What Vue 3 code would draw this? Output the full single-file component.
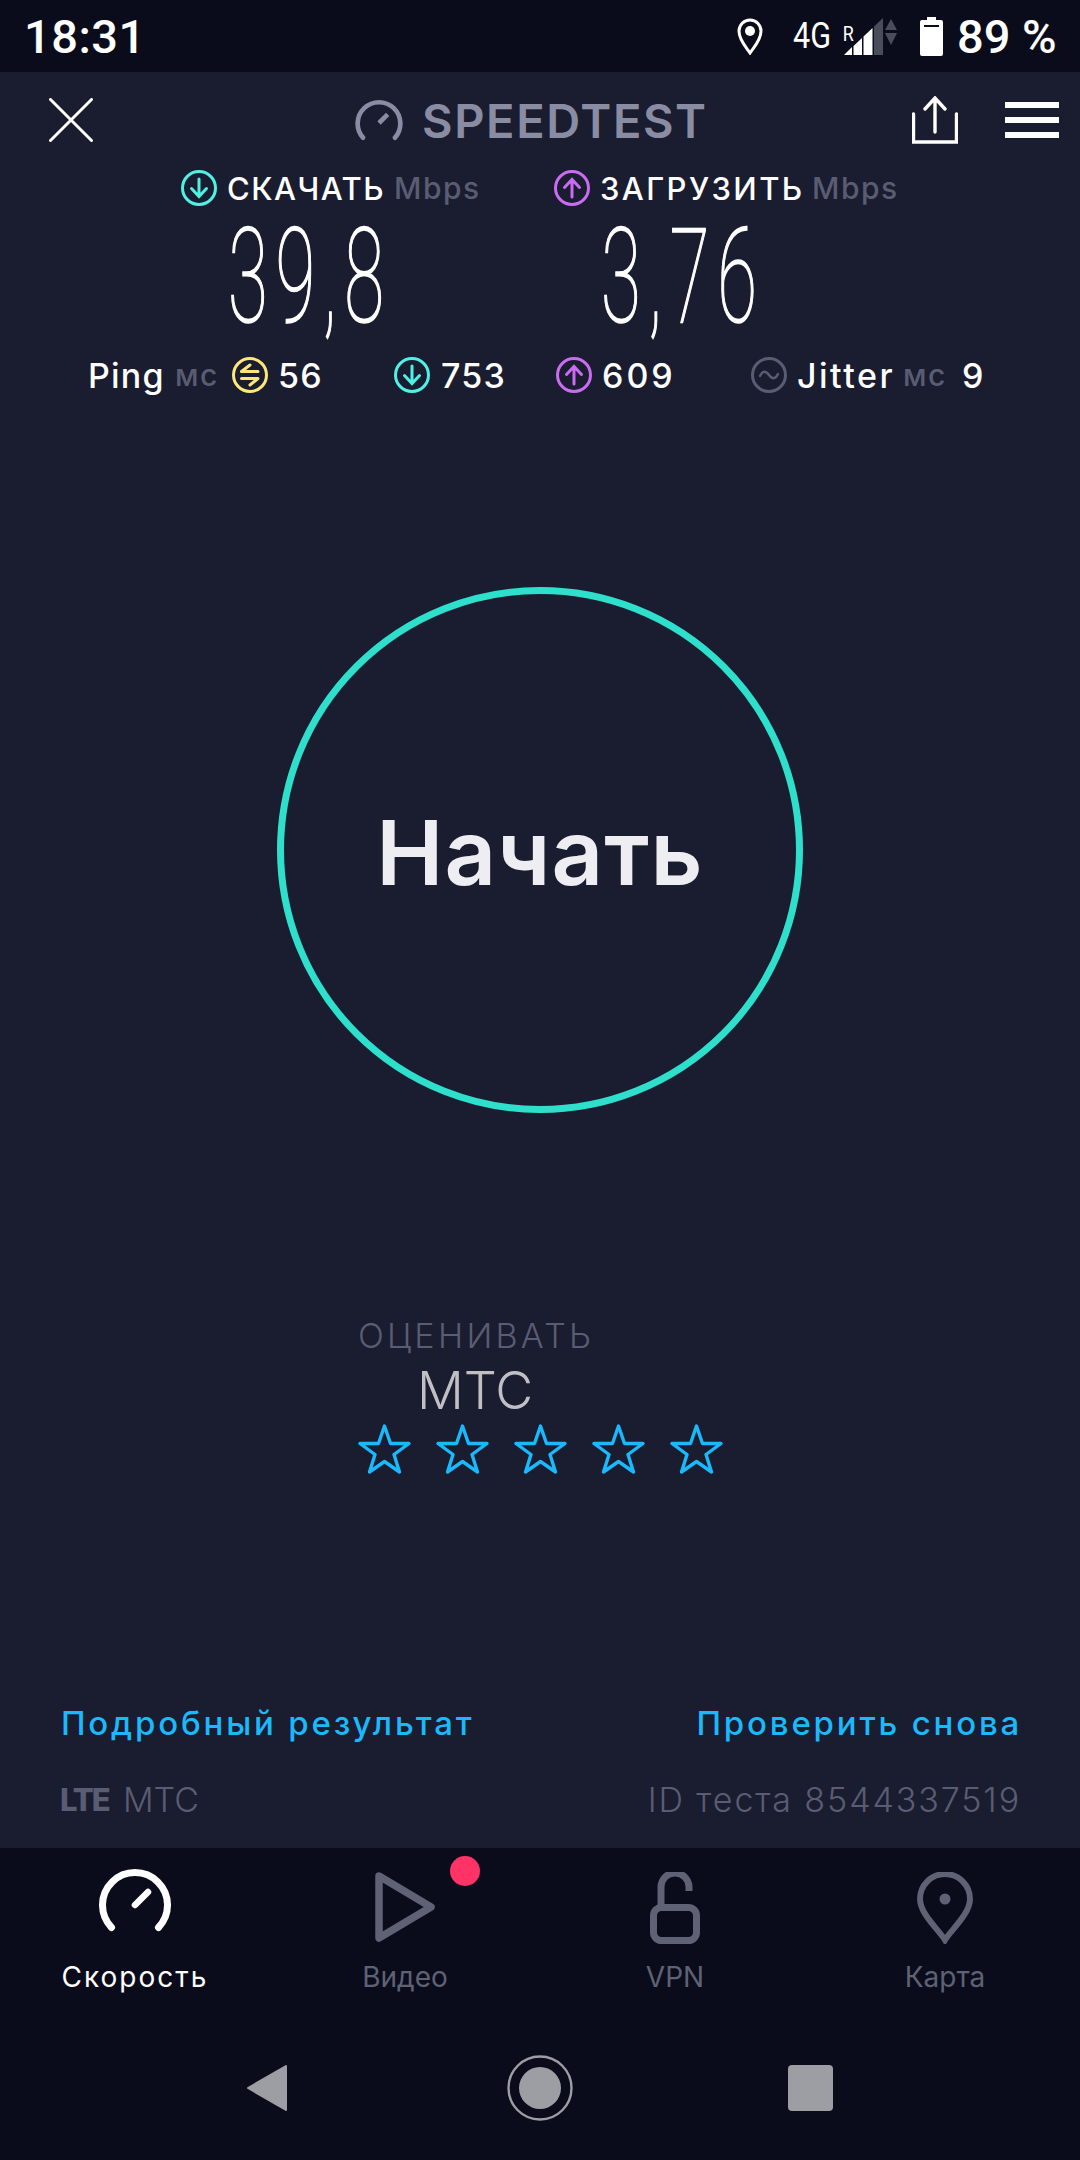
<script setup>
const stars = [1, 2, 3, 4, 5]
const starPath = 'M26.5 3 L32.5 20.5 L51 20.5 L36 31.5 L41.5 49 L26.5 38.5 L11.5 49 L17 31.5 L2 20.5 L20.5 20.5 Z'
</script>

<template>
  <div class="screen">
    <header class="status">
      <span class="time">18:31</span>
      <div class="status-right">
        <svg class="st-pin" viewBox="0 0 26 37" width="26" height="37">
          <path d="M13 35 C9 29 2 22 2 13 A11 11 0 0 1 24 13 C24 22 17 29 13 35 Z" fill="none" stroke="#fff" stroke-width="3" />
          <circle cx="13" cy="13" r="5" fill="#fff" />
        </svg>
        <span class="net">4G</span>
        <span class="roam">R</span>
        <svg class="st-signal" viewBox="0 0 53 37" width="53" height="37">
          <path d="M0 37 L8 29 V37 Z M9.5 28 L18 20 V37 H9.5 Z M19.5 18.5 L28.5 10 V37 H19.5 Z" fill="#fff" />
          <path d="M30 8.5 L39 0 V37 H30 Z" fill="#4b4c5a" />
          <path d="M41 12 L47 1 L53 12 Z M41 15 H53 L47 27 Z" fill="#4b4c5a" />
        </svg>
        <svg class="st-batt" viewBox="0 0 23 39" width="23" height="39">
          <path d="M7 0 H16 V3 H21 Q23 3 23 5 V37 Q23 39 21 39 H2 Q0 39 0 37 V5 Q0 3 2 3 H7 Z" fill="#fff" />
          <rect x="4" y="8" width="15" height="2" fill="#0a0c1b" />
        </svg>
        <span class="pct">89 %</span>
      </div>
    </header>

    <main class="main">
      <div class="topbar">
        <svg class="x-icon" viewBox="0 0 44 44" width="44" height="44">
          <path d="M1.5 1.5 L42.5 42.5 M42.5 1.5 L1.5 42.5" stroke="#fff" stroke-width="3" stroke-linecap="round" />
        </svg>
        <div class="brand">
          <svg viewBox="0 0 72 63" width="48" height="42">
            <path d="M12 58 A32 32 0 1 1 60 58" fill="none" stroke="#8a8ca3" stroke-width="7" stroke-linecap="round" />
            <path d="M36 36 L49 23" stroke="#8a8ca3" stroke-width="7" />
          </svg>
          <span class="brand-text">SPEEDTEST</span>
        </div>
        <div class="top-actions">
          <svg viewBox="0 0 46 48" width="46" height="48">
            <path d="M1.5 18 V46 H44.5 V18 M23 36 V3 M13 13 L23 2 L33 13" fill="none" stroke="#fff" stroke-width="3.4" stroke-linecap="round" />
          </svg>
          <div class="menu"><i></i><i></i><i></i></div>
        </div>
      </div>

      <div class="speeds">
        <div class="speed speed-down">
          <div class="speed-head">
            <svg class="ci" viewBox="0 0 36 36">
              <circle cx="18" cy="18" r="16.5" fill="none" stroke="#4df2e4" stroke-width="3" />
              <path d="M18 9 V26 M10.5 18.5 L18 26.5 L25.5 18.5" fill="none" stroke="#4df2e4" stroke-width="3" stroke-linecap="round" />
            </svg>
            <span class="label w-dl">СКАЧАТЬ</span>
            <span class="unit">Mbps</span>
          </div>
          <div class="big"><span>39,8</span></div>
        </div>
        <div class="speed speed-up">
          <div class="speed-head">
            <svg class="ci" viewBox="0 0 36 36">
              <circle cx="18" cy="18" r="16.5" fill="none" stroke="#ca6cf2" stroke-width="3" />
              <path d="M18 27 V10 M10.5 17.5 L18 9.5 L25.5 17.5" fill="none" stroke="#ca6cf2" stroke-width="3" stroke-linecap="round" />
            </svg>
            <span class="label w-ul">ЗАГРУЗИТЬ</span>
            <span class="unit">Mbps</span>
          </div>
          <div class="big"><span>3,76</span></div>
        </div>
      </div>

      <div class="metrics">
        <span class="m-text w-ping">Ping</span>
        <span class="unit w-ms">мс</span>
        <svg class="ci" viewBox="0 0 36 36">
          <circle cx="18" cy="18" r="16.5" fill="none" stroke="#fbe77a" stroke-width="3" />
          <path d="M18 8 L9.5 14.5 H26 M9.5 21.5 H26 L18 28" fill="none" stroke="#fbe77a" stroke-width="3" stroke-linecap="round" stroke-linejoin="round" />
        </svg>
        <span class="m-text w-56">56</span>
        <svg class="ci" viewBox="0 0 36 36">
          <circle cx="18" cy="18" r="16.5" fill="none" stroke="#4df2e4" stroke-width="3" />
          <path d="M18 9 V26 M10.5 18.5 L18 26.5 L25.5 18.5" fill="none" stroke="#4df2e4" stroke-width="3" stroke-linecap="round" />
        </svg>
        <span class="m-text w-753">753</span>
        <svg class="ci" viewBox="0 0 36 36">
          <circle cx="18" cy="18" r="16.5" fill="none" stroke="#ca6cf2" stroke-width="3" />
          <path d="M18 27 V10 M10.5 17.5 L18 9.5 L25.5 17.5" fill="none" stroke="#ca6cf2" stroke-width="3" stroke-linecap="round" />
        </svg>
        <span class="m-text w-609">609</span>
        <svg class="ci" viewBox="0 0 36 36">
          <circle cx="18" cy="18" r="16.5" fill="none" stroke="#5a5c73" stroke-width="3" />
          <path d="M9 19 C12 13 15 14 18 18 C21 22 24 23 27 17" fill="none" stroke="#5a5c73" stroke-width="2.4" stroke-linecap="round" />
        </svg>
        <span class="m-text w-jit">Jitter</span>
        <span class="unit w-ms2">мс</span>
        <span class="m-text">9</span>
      </div>

      <div class="start-wrap">
        <div class="start">Начать</div>
      </div>

      <div class="rate">
        <div class="rate-title">ОЦЕНИВАТЬ</div>
        <div class="rate-op">МТС</div>
        <div class="stars">
          <svg v-for="s in stars" :key="s" viewBox="0 0 53 52" width="53" height="52">
            <path :d="starPath" fill="none" stroke="#19b9fc" stroke-width="3.4" stroke-linejoin="round" />
          </svg>
        </div>
      </div>

      <div class="links">
        <span>Подробный результат</span>
        <span>Проверить снова</span>
      </div>
      <div class="meta">
        <span class="meta-left"><b>LTE</b><span>МТС</span></span>
        <span>ID теста 8544337519</span>
      </div>
    </main>

    <footer class="bottom">
      <nav class="tabs">
        <div class="tab active">
          <svg viewBox="0 0 72 63" width="72" height="63" class="tab-gauge">
            <path d="M12.5 58.5 A32.5 32.5 0 1 1 59.5 58.5" fill="none" stroke="#fff" stroke-width="7" stroke-linecap="round" />
            <path d="M36 36 L49 23" stroke="#fff" stroke-width="6.5" stroke-linecap="round" />
          </svg>
          <span>Скорость</span>
        </div>
        <div class="tab">
          <div class="play-wrap">
            <svg viewBox="0 0 60 70" width="60" height="70">
              <path d="M4 4 L56 35 L4 66 Z" fill="none" stroke="#5f6174" stroke-width="7.5" stroke-linejoin="round" />
            </svg>
            <i class="dot"></i>
          </div>
          <span>Видео</span>
        </div>
        <div class="tab">
          <svg viewBox="0 0 50 72" width="50" height="72">
            <path d="M11 34 V15 A14 14 0 0 1 39 15 V19" fill="none" stroke="#5f6174" stroke-width="7" />
            <rect x="3.5" y="35.5" width="43" height="33" rx="8" fill="none" stroke="#5f6174" stroke-width="7" />
          </svg>
          <span>VPN</span>
        </div>
        <div class="tab">
          <svg viewBox="0 0 56 72" width="56" height="72">
            <path d="M28 68 C22 58 3 42 3 27 A25 25 0 0 1 53 27 C53 42 34 58 28 68 Z" fill="none" stroke="#5f6174" stroke-width="6" />
            <circle cx="28" cy="27" r="5.5" fill="#5f6174" />
          </svg>
          <span>Карта</span>
        </div>
      </nav>
      <div class="sysnav">
        <svg viewBox="0 0 42 48" width="42" height="48">
          <path d="M40 2 V46 L2 24 Z" fill="#9d9ea4" stroke="#9d9ea4" stroke-width="2" stroke-linejoin="round" />
        </svg>
        <svg viewBox="0 0 66 66" width="66" height="66">
          <circle cx="33" cy="33" r="31.5" fill="none" stroke="#9d9ea4" stroke-width="2.4" />
          <circle cx="33" cy="33" r="21" fill="#9d9ea4" />
        </svg>
        <div class="square"></div>
      </div>
    </footer>
  </div>
</template>

<style>
html, body { margin: 0; background: #0a0c1b; }
</style>

<style scoped>
.screen {
  width: 1080px;
  height: 2160px;
  display: flex;
  flex-direction: column;
  background: #1a1c2f;
  color: #fff;
  font-family: Inter, "Noto Sans", sans-serif;
  overflow: hidden;
}
.status {
  height: 72px;
  flex: none;
  background: #0a0c1b;
  display: flex;
  align-items: center;
  justify-content: space-between;
  padding: 0 25px 0 24px;
  font-family: Roboto, sans-serif;
}
.time { font-size: 47px; font-weight: 500; letter-spacing: 0.5px; }
.status-right { display: flex; align-items: center; }
.st-pin { margin-right: 30px; }
.net { font-size: 36px; font-weight: 400; width: 40px; display: inline-block; transform: scaleX(.85); transform-origin: left; }
.roam { font-size: 21px; line-height: 24px; width: 11px; align-self: flex-start; margin: 13px 0 0 9px; transform: scaleX(.85); }
.st-signal { margin-left: -9px; }
.st-batt { margin-left: 23px; }
.pct { font-size: 47px; font-weight: 500; margin-left: 14px; width: 98px; white-space: pre; }

.main { flex: 1; display: flex; flex-direction: column; }
.topbar {
  height: 70px;
  margin-top: 13px;
  display: flex;
  align-items: center;
  padding: 0 21px 0 49px;
  position: relative;
}
.brand {
  display: flex;
  align-items: center;
  gap: 19px;
  margin-left: 262px;
}
.brand-text { font-size: 47px; font-weight: 600; color: #8a8ca3; letter-spacing: 1.6px; }
.top-actions { margin-left: auto; display: flex; align-items: center; gap: 47px; }
.menu { width: 54px; display: flex; flex-direction: column; gap: 8.5px; }
.menu i { display: block; height: 6.5px; background: #fff; }

.speeds { display: flex; padding-left: 181px; margin-top: 15px; }
.speed { display: flex; flex-direction: column; }
.speed-down { width: 373px; }
.speed-head { display: flex; align-items: center; height: 36px; }
.ci { width: 36px; height: 36px; flex: none; }
.label { font-size: 31px; font-weight: 500; color: #fff; margin-left: 10px; white-space: nowrap; }
.w-dl { width: 167px; letter-spacing: 1.5px; }
.w-ul { width: 212px; letter-spacing: 2.4px; }
.unit { font-size: 30px; font-weight: 500; color: #5a5c73; white-space: nowrap; letter-spacing: 1.5px; }
.big {
  height: 126px;
  margin-top: 8px;
  display: flex;
  align-items: center;
  padding-left: 47px;
}
.big span {
  font-family: Roboto, sans-serif;
  font-weight: 100;
  font-size: 132px;
  line-height: 126px;
  letter-spacing: 14px;
  -webkit-text-stroke: 1.6px #fff;
  display: inline-block;
  transform: scaleX(.55);
  transform-origin: left center;
  white-space: nowrap;
}

.metrics {
  display: flex;
  align-items: center;
  height: 36px;
  padding-left: 88px;
  margin-top: 17px;
}
.m-text { font-size: 34px; font-weight: 500; white-space: nowrap; color: #fff; letter-spacing: 1.2px; }
.w-ping { width: 87px; }
.w-ms { width: 57px; }
.w-56 { width: 116px; margin-left: 10px; }
.w-753 { width: 115px; margin-left: 11px; }
.w-609 { width: 149px; margin-left: 10px; letter-spacing: 3px; }
.w-jit { width: 106px; margin-left: 10px; letter-spacing: 2.5px; }
.w-ms2 { width: 59px; }

.start-wrap { display: flex; justify-content: center; margin-top: 194px; }
.start {
  width: 526px;
  height: 526px;
  box-sizing: border-box;
  border: 7px solid #2ee0cc;
  border-radius: 50%;
  display: flex;
  align-items: center;
  justify-content: center;
  font-size: 90px;
  font-weight: 600;
  letter-spacing: 1px;
  color: #eeeef2;
  padding-top: 4px;
}

.rate { margin-top: 203px; padding-left: 358px; }
.rate-title { font-size: 34px; font-weight: 300; color: #5a5c73; line-height: 40px; letter-spacing: 3.3px; }
.rate-op { font-size: 52px; font-weight: 300; color: #c0c0c4; line-height: 60px; padding-left: 59px; margin-top: 5px; }
.stars { display: flex; gap: 25px; margin-top: 2px; }

.links {
  margin-top: 226px;
  display: flex;
  justify-content: space-between;
  padding: 0 58px 0 61px;
  font-size: 33px;
  font-weight: 500;
  line-height: 44px;
  color: #19b9fc;
  letter-spacing: 2.8px;
}
.meta {
  margin-top: 33px;
  display: flex;
  justify-content: space-between;
  padding: 0 59px 0 60px;
  font-size: 34px;
  font-weight: 300;
  line-height: 44px;
  color: #5a5c73;
  letter-spacing: 1.9px;
}
.meta-left { display: flex; align-items: center; gap: 13px; letter-spacing: 0; }
.meta-left b { font-size: 31px; font-weight: 800; letter-spacing: -2px; width: 50px; }

.bottom {
  margin-top: auto;
  height: 312px;
  flex: none;
  background: #0a0c1b;
  display: flex;
  flex-direction: column;
}
.tabs { display: grid; grid-template-columns: repeat(4, 270px); padding-top: 24px; }
.tab {
  display: flex;
  flex-direction: column;
  align-items: center;
  height: 123px;
  font-size: 28px;
  color: #5f6174;
  position: relative;
}
.tab svg { display: block; flex: none; }
.tab span { margin-top: auto; line-height: 36px; }
.tab.active { color: #fff; letter-spacing: 2px; }
.tab-gauge { margin-top: -3px; }
.play-wrap { position: relative; width: 60px; height: 70px; }
.dot {
  position: absolute;
  left: 75px;
  top: -16px;
  width: 30px;
  height: 30px;
  border-radius: 50%;
  background: #ff3366;
}
.sysnav {
  display: flex;
  align-items: center;
  padding-left: 246px;
  margin-top: 60px;
  height: 66px;
}
.sysnav svg:nth-child(2) { margin-left: 219px; }
.square { width: 45px; height: 46px; border-radius: 4px; background: #9d9ea4; margin-left: 215px; }
</style>
